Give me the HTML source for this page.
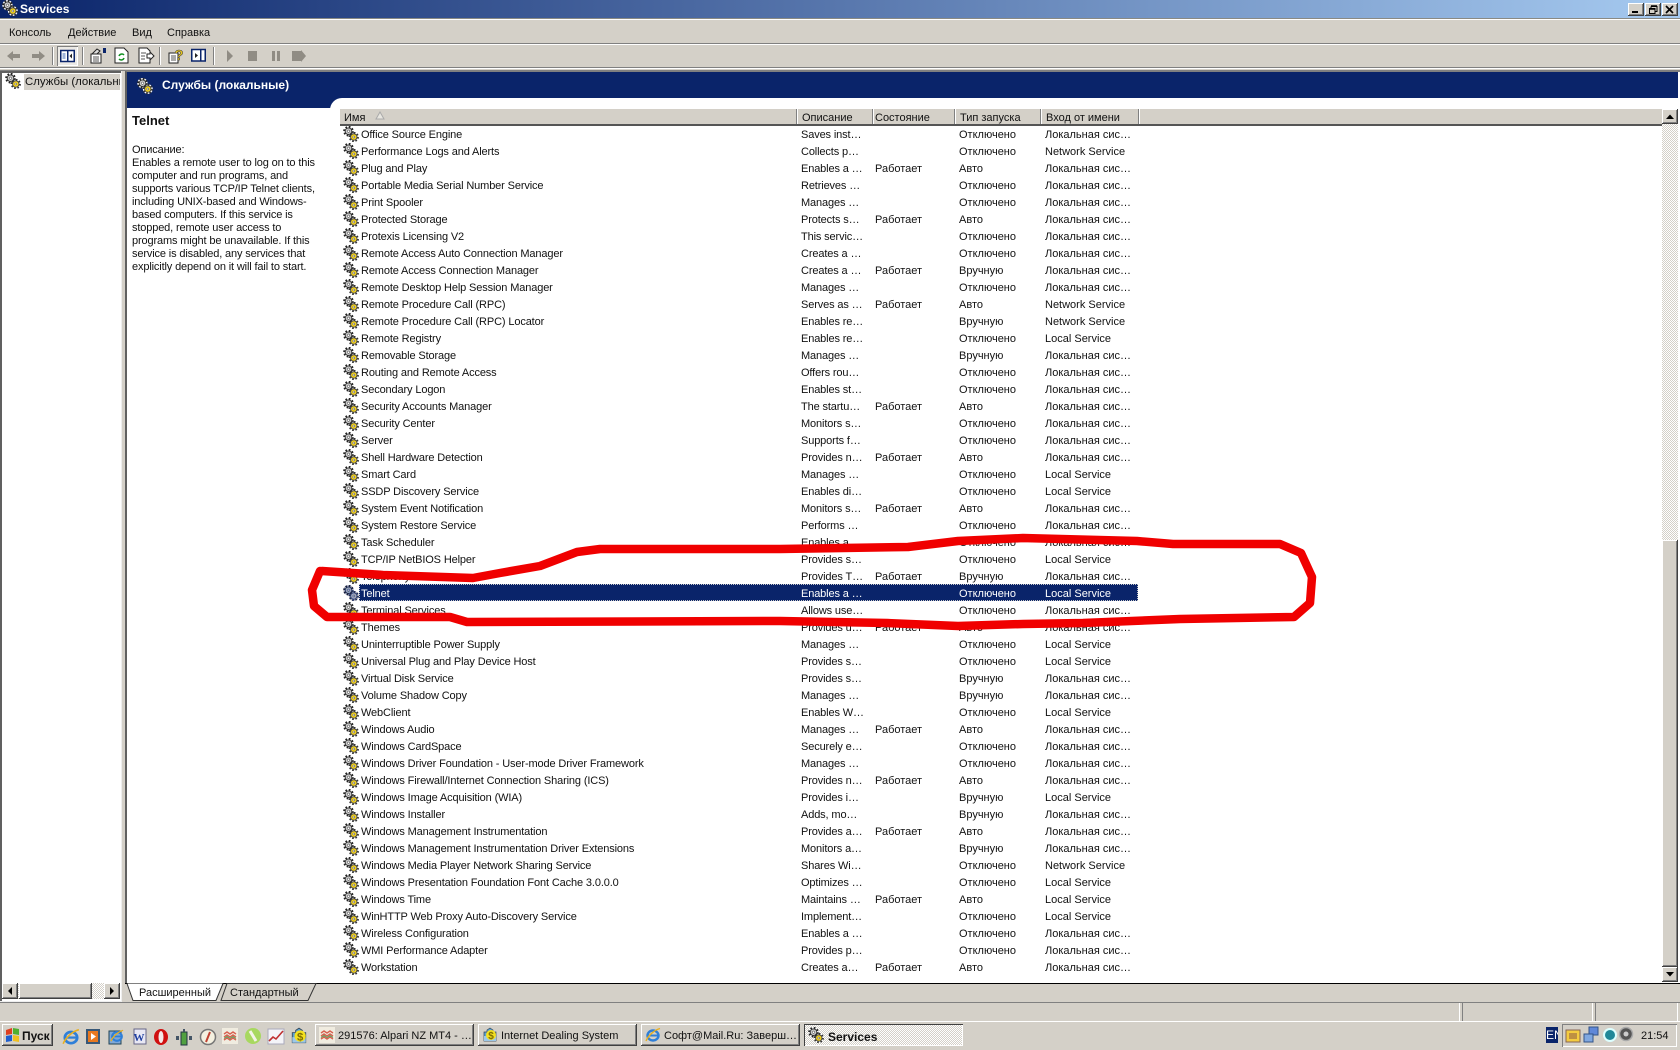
<!DOCTYPE html>
<html lang="ru"><head><meta charset="utf-8"><title>Services</title>
<style>
html,body{margin:0;padding:0;width:1680px;height:1050px;overflow:hidden;background:#d4d0c8}
body{position:relative;font:11px/13px "Liberation Sans","Noto Sans CJK SC",sans-serif;color:#111}
div,span,svg{position:absolute}
.b{background:#d4d0c8;box-shadow:inset -1px -1px #404040,inset 1px 1px #fff,inset -2px -2px #808080}
.ck{background:repeating-conic-gradient(#d4d0c8 0 25%,#fff 0 50%) 0 0/2px 2px}
.t{white-space:nowrap}
.lat{letter-spacing:-.14px}
table{position:absolute;left:340px;top:126px;border-collapse:collapse;table-layout:fixed;width:798px}
td{height:15px;padding:2px 0 0;white-space:nowrap;overflow:hidden;line-height:15px}
td:first-child,.c2{letter-spacing:-.13px}
td svg{position:static;display:inline-block;vertical-align:top;margin:-2px 2px 0 3px}
.c2,.c3,.c4,.c5{padding-left:5px}
.c3{padding-left:3px}
.sel td{color:#fff}
.sel svg{filter:grayscale(1) sepia(1) hue-rotate(190deg) saturate(3) brightness(.7)}
.sp{width:1px;height:18px;background:#808080;box-shadow:1px 0 #fff;top:47px}
.tb{top:1024px;height:22px;width:159px;line-height:22px;white-space:nowrap}
.tb span{top:1px;left:23px}
.h{top:111px;height:15px;line-height:15px;white-space:nowrap}
.hs{top:109px;width:1px;height:15px;background:#808080;box-shadow:1px 0 #fff}
</style></head><body>
<svg width="0" height="0" style="position:absolute"><defs>
<symbol id="g" viewBox="0 0 16 16">
<circle cx="5.5" cy="5.200" r="5.200" fill="#fff"/>
<circle cx="10.800" cy="11" r="5" fill="#fff"/>
<circle cx="5.500" cy="5.200" r="4.300" fill="none" stroke="#222" stroke-width="2" stroke-dasharray="1.700 1.700"/>
<circle cx="5.500" cy="5.200" r="3.300" fill="#c8c8c8" stroke="#333" stroke-width=".9"/>
<circle cx="5.500" cy="5.200" r="1.200" fill="#fff" stroke="#333" stroke-width=".5"/>
<circle cx="10.800" cy="11" r="4.100" fill="none" stroke="#333" stroke-width="2" stroke-dasharray="1.600 1.600"/>
<circle cx="10.800" cy="11" r="3.200" fill="#f0d020" stroke="#444" stroke-width=".9"/>
<circle cx="10.800" cy="11" r="1" fill="#fff" stroke="#444" stroke-width=".5"/>
</symbol>
<symbol id="e" viewBox="0 0 16 16">
<ellipse cx="8" cy="8.500" rx="5.500" ry="5" fill="none" stroke="#2f7fd8" stroke-width="2.400"/>
<path d="M3 8.500h10.500" stroke="#2f7fd8" stroke-width="2"/>
<path d="M1 14C3 9 9 3 15 1.500" fill="none" stroke="#e8b020" stroke-width="1.400"/>
</symbol>
<symbol id="d" viewBox="0 0 16 16">
<path d="M8 1l3 2v2h3v9H2V5h3V3z" fill="#5aa0d0" stroke="#345" stroke-width=".7"/>
<rect x="2" y="9" width="12" height="5" fill="#9cc8e8"/>
<circle cx="9" cy="8" r="5" fill="#f4e020"/>
<text x="9" y="12" font-size="10" font-weight="bold" fill="#807000" text-anchor="middle" font-family="Liberation Sans">$</text>
</symbol>
<symbol id="m" viewBox="0 0 16 16">
<rect width="16" height="16" fill="#f0ece0"/>
<path d="M2 6l3-2 3 2 3-2 3 2M2 9l3-2 3 2 3-2 3 2M2 12l3-2 3 2 3-2 3 2" fill="none" stroke="#d86050" stroke-width="1.400"/>
<path d="M2 10.500l3-2 3 2 3-2 3 2" fill="none" stroke="#60a060"/>
</symbol>
</defs></svg>

<!-- title bar -->
<div style="left:0;top:0;width:1680px;height:18px;background:linear-gradient(90deg,#0a246a,#a6caf0)"></div>
<svg style="left:2px;top:0" width="16" height="16"><use href="#g"/></svg>
<div class="t" style="left:20px;top:3px;color:#fff;font-weight:bold;font-size:12px">Services</div>
<div class="b" style="left:1628px;top:3px;width:16px;height:13px"></div>
<div style="left:1632px;top:11px;width:6px;height:2px;background:#000"></div>
<div class="b" style="left:1645px;top:3px;width:16px;height:13px"></div>
<svg style="left:1645px;top:3px" width="16" height="13"><path d="M6 3.500h6v5h-2M6 3.500v1.500M4.500 5.500h5.500v5h-5.500z" fill="none" stroke="#000"/><path d="M6 3h6M4.500 6h5.500" stroke="#000" stroke-width="1.500"/></svg>
<div class="b" style="left:1662px;top:3px;width:16px;height:13px"></div>
<svg style="left:1662px;top:3px" width="16" height="13"><path d="M4 3l7 7M11 3l-7 7" stroke="#000" stroke-width="1.700"/></svg>

<!-- menu -->
<div style="left:0;top:18px;width:1680px;height:1px;background:#8a8a84"></div>
<div style="left:0;top:19px;width:1680px;height:1px;background:#fff"></div>
<div class="t" style="left:9px;top:27px">Консоль</div>
<div class="t" style="left:68px;top:27px">Действие</div>
<div class="t" style="left:132px;top:27px">Вид</div>
<div class="t" style="left:167px;top:27px">Справка</div>
<div style="left:0;top:43px;width:1680px;height:1px;background:#808080"></div>
<div style="left:0;top:44px;width:1680px;height:1px;background:#fff"></div>
<!-- toolbar -->
<svg style="left:6px;top:48px" width="40" height="16"><path d="M1 8l6-5v3h7v4H7v3z" fill="#908c84"/><path d="M39 8l-6-5v3h-7v4h7v3z" fill="#908c84"/></svg>
<div class="sp" style="left:52px"></div>
<div style="left:57px;top:46px;width:21px;height:20px;background:#eceae6;box-shadow:inset 1px 1px #808080,inset -1px -1px #fff"></div>
<svg style="left:60px;top:48px" width="16" height="16"><rect x=".75" y="2.500" width="13.500" height="11" fill="#fff" stroke="#0a246a" stroke-width="1.500"/><rect x="7" y="3" width="1.500" height="10" fill="#0a246a"/><path d="M12 5.500v5L9.500 8z" fill="#222"/><rect x="2.500" y="5" width="3" height="6" fill="#a0b4d8"/></svg>
<div class="sp" style="left:82px"></div>
<svg style="left:90px;top:47px" width="17" height="17"><path d="M1 7h10v9H1z" fill="#fff" stroke="#222"/><path d="M3 10h6M3 12h6M3 14h6" stroke="#555"/><path d="M2 7l5-5 3 2-3 3z" fill="#ddd" stroke="#222"/><rect x="13" y="1" width="3" height="5" fill="#0a246a"/></svg>
<svg style="left:114px;top:47px" width="15" height="17"><path d="M1 1h9l4 4v11H1z" fill="#fff" stroke="#222"/><path d="M5 9a3 3 0 0 1 5-1M10 11a3 3 0 0 1-5 1" fill="none" stroke="#109020" stroke-width="1.500"/></svg>
<svg style="left:138px;top:47px" width="17" height="17"><path d="M1 1h8l3 3v12H1z" fill="#fff" stroke="#222"/><path d="M3 6h5M3 9h4M3 12h4" stroke="#555"/><path d="M9 7h3V5l4 4-4 4v-2H9z" fill="#fff" stroke="#222"/></svg>
<div class="sp" style="left:159px"></div>
<svg style="left:168px;top:47px" width="17" height="17"><path d="M1 6h9v10H1z" fill="#fff" stroke="#222"/><path d="M3 9h5M3 11h5M3 13h5" stroke="#555"/><text x="11" y="13" font-size="15" font-weight="bold" fill="#e8c820" stroke="#333" stroke-width=".5" text-anchor="middle" font-family="Liberation Sans">?</text></svg>
<svg style="left:191px;top:48px" width="15" height="15"><rect x=".75" y="1.500" width="13.500" height="11.500" fill="#fff" stroke="#0a246a" stroke-width="1.500"/><rect x="9" y="2" width="1.500" height="11" fill="#0a246a"/><path d="M4 5v5l3-2.500z" fill="#222"/></svg>
<div class="sp" style="left:213px"></div>
<svg style="left:226px;top:48px" width="84" height="16"><path d="M1 2l6 6-6 6z" fill="#908c84"/><rect x="22" y="3" width="9" height="10" fill="#908c84"/><rect x="46" y="3" width="3" height="10" fill="#908c84"/><rect x="51" y="3" width="3" height="10" fill="#908c84"/><rect x="66" y="3" width="9" height="10" fill="#908c84"/><path d="M75 2l5 6-5 6z" fill="#908c84"/></svg>
<div style="left:0;top:67px;width:1680px;height:1px;background:#808080"></div>
<div style="left:0;top:68px;width:1680px;height:1px;background:#fff"></div>
<div style="left:0;top:70px;width:1680px;height:1px;background:#808080"></div>

<!-- tree pane -->
<div style="left:0;top:71px;width:121px;height:930px;background:#fff;box-shadow:inset 2px 2px #606060;border-right:1px solid #eee;border-bottom:1px solid #eee"></div>
<svg style="left:5px;top:73px" width="16" height="16"><use href="#g"/></svg>
<div style="left:24px;top:74px;width:96px;height:16px;background:#d4d0c8;overflow:hidden"><span class="t" style="left:1px;top:2px;font-size:11.400px">Службы (локальные)</span></div>
<!-- hscroll tree -->
<div class="ck" style="left:2px;top:983px;width:118px;height:16px"></div>
<div class="b" style="left:2px;top:983px;width:16px;height:16px"></div>
<svg style="left:2px;top:983px" width="16" height="16"><path d="M10 4v8L6 8z" fill="#000"/></svg>
<div class="b" style="left:19px;top:983px;width:73px;height:16px"></div>
<div class="b" style="left:104px;top:983px;width:16px;height:16px"></div>
<svg style="left:104px;top:983px" width="16" height="16"><path d="M6 4v8l4-4z" fill="#000"/></svg>

<!-- right pane -->
<div style="left:125px;top:71px;width:1555px;height:912px;background:#fff;border-left:2px solid #606060;border-top:1px solid #808080;box-sizing:border-box"></div>
<div style="left:127px;top:72px;width:1551px;height:26px;background:#0a246a"></div>
<div style="left:127px;top:98px;width:220px;height:10px;background:#0a246a"></div>
<div style="left:330px;top:98px;width:30px;height:12px;background:#fff;border-radius:12px 0 0 0"></div>
<svg style="left:137px;top:78px" width="16" height="16"><use href="#g"/></svg>
<div class="t" style="left:162px;top:79px;color:#fff;font-weight:bold;font-size:12px">Службы (локальные)</div>
<div class="t" style="left:132px;top:114px;font-weight:bold;font-size:13px">Telnet</div>
<div class="t lat" style="left:132px;top:144px">Описание:<br>Enables a remote user to log on to this<br>computer and run programs, and<br>supports various TCP/IP Telnet clients,<br>including UNIX-based and Windows-<br>based computers. If this service is<br>stopped, remote user access to<br>programs might be unavailable. If this<br>service is disabled, any services that<br>explicitly depend on it will fail to start.</div>

<!-- list header -->
<div style="left:340px;top:109px;width:1322px;height:15px;background:#d4d0c8;border-bottom:2px solid #555"></div>
<div class="h" style="left:344px">Имя</div>
<svg style="left:375px;top:111px" width="11" height="10"><path d="M5 1l4 7H1z" fill="#e8e6e0" stroke="#aaa"/></svg>
<div class="hs" style="left:796px"></div><div class="h" style="left:802px">Описание</div>
<div class="hs" style="left:872px"></div><div class="h" style="left:875px">Состояние</div>
<div class="hs" style="left:954px"></div><div class="h" style="left:960px">Тип запуска</div>
<div class="hs" style="left:1040px"></div><div class="h" style="left:1046px">Вход от имени</div>
<div class="hs" style="left:1138px"></div>

<!-- scrollbar -->
<div class="ck" style="left:1662px;top:109px;width:16px;height:431px"></div>
<div class="b" style="left:1662px;top:109px;width:16px;height:15px"></div>
<svg style="left:1662px;top:109px" width="16" height="15"><path d="M4 10h8L8 5.500z" fill="#000"/></svg>
<div class="b" style="left:1662px;top:540px;width:16px;height:427px"></div>
<div class="b" style="left:1662px;top:967px;width:16px;height:15px"></div>
<svg style="left:1662px;top:967px" width="16" height="15"><path d="M4 5h8L8 9.500z" fill="#000"/></svg>

<!-- selection -->
<div style="left:359px;top:584px;width:779px;height:17px;background:#0a246a;outline:1px dotted #c8c8c8;outline-offset:-1px"></div>

<table><colgroup><col style="width:456px"><col style="width:76px"><col style="width:82px"><col style="width:86px"><col style="width:98px"></colgroup>
<tr><td><svg width="16" height="16"><use href="#g"/></svg>Office Source Engine</td><td class="c2">Saves inst…</td><td class="c3"></td><td class="c4">Отключено</td><td class="c5">Локальная сис…</td></tr>
<tr><td><svg width="16" height="16"><use href="#g"/></svg>Performance Logs and Alerts</td><td class="c2">Collects p…</td><td class="c3"></td><td class="c4">Отключено</td><td class="c5">Network Service</td></tr>
<tr><td><svg width="16" height="16"><use href="#g"/></svg>Plug and Play</td><td class="c2">Enables a …</td><td class="c3">Работает</td><td class="c4">Авто</td><td class="c5">Локальная сис…</td></tr>
<tr><td><svg width="16" height="16"><use href="#g"/></svg>Portable Media Serial Number Service</td><td class="c2">Retrieves …</td><td class="c3"></td><td class="c4">Отключено</td><td class="c5">Локальная сис…</td></tr>
<tr><td><svg width="16" height="16"><use href="#g"/></svg>Print Spooler</td><td class="c2">Manages …</td><td class="c3"></td><td class="c4">Отключено</td><td class="c5">Локальная сис…</td></tr>
<tr><td><svg width="16" height="16"><use href="#g"/></svg>Protected Storage</td><td class="c2">Protects s…</td><td class="c3">Работает</td><td class="c4">Авто</td><td class="c5">Локальная сис…</td></tr>
<tr><td><svg width="16" height="16"><use href="#g"/></svg>Protexis Licensing V2</td><td class="c2">This servic…</td><td class="c3"></td><td class="c4">Отключено</td><td class="c5">Локальная сис…</td></tr>
<tr><td><svg width="16" height="16"><use href="#g"/></svg>Remote Access Auto Connection Manager</td><td class="c2">Creates a …</td><td class="c3"></td><td class="c4">Отключено</td><td class="c5">Локальная сис…</td></tr>
<tr><td><svg width="16" height="16"><use href="#g"/></svg>Remote Access Connection Manager</td><td class="c2">Creates a …</td><td class="c3">Работает</td><td class="c4">Вручную</td><td class="c5">Локальная сис…</td></tr>
<tr><td><svg width="16" height="16"><use href="#g"/></svg>Remote Desktop Help Session Manager</td><td class="c2">Manages …</td><td class="c3"></td><td class="c4">Отключено</td><td class="c5">Локальная сис…</td></tr>
<tr><td><svg width="16" height="16"><use href="#g"/></svg>Remote Procedure Call (RPC)</td><td class="c2">Serves as …</td><td class="c3">Работает</td><td class="c4">Авто</td><td class="c5">Network Service</td></tr>
<tr><td><svg width="16" height="16"><use href="#g"/></svg>Remote Procedure Call (RPC) Locator</td><td class="c2">Enables re…</td><td class="c3"></td><td class="c4">Вручную</td><td class="c5">Network Service</td></tr>
<tr><td><svg width="16" height="16"><use href="#g"/></svg>Remote Registry</td><td class="c2">Enables re…</td><td class="c3"></td><td class="c4">Отключено</td><td class="c5">Local Service</td></tr>
<tr><td><svg width="16" height="16"><use href="#g"/></svg>Removable Storage</td><td class="c2">Manages …</td><td class="c3"></td><td class="c4">Вручную</td><td class="c5">Локальная сис…</td></tr>
<tr><td><svg width="16" height="16"><use href="#g"/></svg>Routing and Remote Access</td><td class="c2">Offers rou…</td><td class="c3"></td><td class="c4">Отключено</td><td class="c5">Локальная сис…</td></tr>
<tr><td><svg width="16" height="16"><use href="#g"/></svg>Secondary Logon</td><td class="c2">Enables st…</td><td class="c3"></td><td class="c4">Отключено</td><td class="c5">Локальная сис…</td></tr>
<tr><td><svg width="16" height="16"><use href="#g"/></svg>Security Accounts Manager</td><td class="c2">The startu…</td><td class="c3">Работает</td><td class="c4">Авто</td><td class="c5">Локальная сис…</td></tr>
<tr><td><svg width="16" height="16"><use href="#g"/></svg>Security Center</td><td class="c2">Monitors s…</td><td class="c3"></td><td class="c4">Отключено</td><td class="c5">Локальная сис…</td></tr>
<tr><td><svg width="16" height="16"><use href="#g"/></svg>Server</td><td class="c2">Supports f…</td><td class="c3"></td><td class="c4">Отключено</td><td class="c5">Локальная сис…</td></tr>
<tr><td><svg width="16" height="16"><use href="#g"/></svg>Shell Hardware Detection</td><td class="c2">Provides n…</td><td class="c3">Работает</td><td class="c4">Авто</td><td class="c5">Локальная сис…</td></tr>
<tr><td><svg width="16" height="16"><use href="#g"/></svg>Smart Card</td><td class="c2">Manages …</td><td class="c3"></td><td class="c4">Отключено</td><td class="c5">Local Service</td></tr>
<tr><td><svg width="16" height="16"><use href="#g"/></svg>SSDP Discovery Service</td><td class="c2">Enables di…</td><td class="c3"></td><td class="c4">Отключено</td><td class="c5">Local Service</td></tr>
<tr><td><svg width="16" height="16"><use href="#g"/></svg>System Event Notification</td><td class="c2">Monitors s…</td><td class="c3">Работает</td><td class="c4">Авто</td><td class="c5">Локальная сис…</td></tr>
<tr><td><svg width="16" height="16"><use href="#g"/></svg>System Restore Service</td><td class="c2">Performs …</td><td class="c3"></td><td class="c4">Отключено</td><td class="c5">Локальная сис…</td></tr>
<tr><td><svg width="16" height="16"><use href="#g"/></svg>Task Scheduler</td><td class="c2">Enables a …</td><td class="c3"></td><td class="c4">Отключено</td><td class="c5">Локальная сис…</td></tr>
<tr><td><svg width="16" height="16"><use href="#g"/></svg>TCP/IP NetBIOS Helper</td><td class="c2">Provides s…</td><td class="c3"></td><td class="c4">Отключено</td><td class="c5">Local Service</td></tr>
<tr><td><svg width="16" height="16"><use href="#g"/></svg>Telephony</td><td class="c2">Provides T…</td><td class="c3">Работает</td><td class="c4">Вручную</td><td class="c5">Локальная сис…</td></tr>
<tr class="sel"><td><svg width="16" height="16"><use href="#g"/></svg>Telnet</td><td class="c2">Enables a …</td><td class="c3"></td><td class="c4">Отключено</td><td class="c5">Local Service</td></tr>
<tr><td><svg width="16" height="16"><use href="#g"/></svg>Terminal Services</td><td class="c2">Allows use…</td><td class="c3"></td><td class="c4">Отключено</td><td class="c5">Локальная сис…</td></tr>
<tr><td><svg width="16" height="16"><use href="#g"/></svg>Themes</td><td class="c2">Provides u…</td><td class="c3">Работает</td><td class="c4">Авто</td><td class="c5">Локальная сис…</td></tr>
<tr><td><svg width="16" height="16"><use href="#g"/></svg>Uninterruptible Power Supply</td><td class="c2">Manages …</td><td class="c3"></td><td class="c4">Отключено</td><td class="c5">Local Service</td></tr>
<tr><td><svg width="16" height="16"><use href="#g"/></svg>Universal Plug and Play Device Host</td><td class="c2">Provides s…</td><td class="c3"></td><td class="c4">Отключено</td><td class="c5">Local Service</td></tr>
<tr><td><svg width="16" height="16"><use href="#g"/></svg>Virtual Disk Service</td><td class="c2">Provides s…</td><td class="c3"></td><td class="c4">Вручную</td><td class="c5">Локальная сис…</td></tr>
<tr><td><svg width="16" height="16"><use href="#g"/></svg>Volume Shadow Copy</td><td class="c2">Manages …</td><td class="c3"></td><td class="c4">Вручную</td><td class="c5">Локальная сис…</td></tr>
<tr><td><svg width="16" height="16"><use href="#g"/></svg>WebClient</td><td class="c2">Enables W…</td><td class="c3"></td><td class="c4">Отключено</td><td class="c5">Local Service</td></tr>
<tr><td><svg width="16" height="16"><use href="#g"/></svg>Windows Audio</td><td class="c2">Manages …</td><td class="c3">Работает</td><td class="c4">Авто</td><td class="c5">Локальная сис…</td></tr>
<tr><td><svg width="16" height="16"><use href="#g"/></svg>Windows CardSpace</td><td class="c2">Securely e…</td><td class="c3"></td><td class="c4">Отключено</td><td class="c5">Локальная сис…</td></tr>
<tr><td><svg width="16" height="16"><use href="#g"/></svg>Windows Driver Foundation - User-mode Driver Framework</td><td class="c2">Manages …</td><td class="c3"></td><td class="c4">Отключено</td><td class="c5">Локальная сис…</td></tr>
<tr><td><svg width="16" height="16"><use href="#g"/></svg>Windows Firewall/Internet Connection Sharing (ICS)</td><td class="c2">Provides n…</td><td class="c3">Работает</td><td class="c4">Авто</td><td class="c5">Локальная сис…</td></tr>
<tr><td><svg width="16" height="16"><use href="#g"/></svg>Windows Image Acquisition (WIA)</td><td class="c2">Provides i…</td><td class="c3"></td><td class="c4">Вручную</td><td class="c5">Local Service</td></tr>
<tr><td><svg width="16" height="16"><use href="#g"/></svg>Windows Installer</td><td class="c2">Adds, mo…</td><td class="c3"></td><td class="c4">Вручную</td><td class="c5">Локальная сис…</td></tr>
<tr><td><svg width="16" height="16"><use href="#g"/></svg>Windows Management Instrumentation</td><td class="c2">Provides a…</td><td class="c3">Работает</td><td class="c4">Авто</td><td class="c5">Локальная сис…</td></tr>
<tr><td><svg width="16" height="16"><use href="#g"/></svg>Windows Management Instrumentation Driver Extensions</td><td class="c2">Monitors a…</td><td class="c3"></td><td class="c4">Вручную</td><td class="c5">Локальная сис…</td></tr>
<tr><td><svg width="16" height="16"><use href="#g"/></svg>Windows Media Player Network Sharing Service</td><td class="c2">Shares Wi…</td><td class="c3"></td><td class="c4">Отключено</td><td class="c5">Network Service</td></tr>
<tr><td><svg width="16" height="16"><use href="#g"/></svg>Windows Presentation Foundation Font Cache 3.0.0.0</td><td class="c2">Optimizes …</td><td class="c3"></td><td class="c4">Отключено</td><td class="c5">Local Service</td></tr>
<tr><td><svg width="16" height="16"><use href="#g"/></svg>Windows Time</td><td class="c2">Maintains …</td><td class="c3">Работает</td><td class="c4">Авто</td><td class="c5">Local Service</td></tr>
<tr><td><svg width="16" height="16"><use href="#g"/></svg>WinHTTP Web Proxy Auto-Discovery Service</td><td class="c2">Implement…</td><td class="c3"></td><td class="c4">Отключено</td><td class="c5">Local Service</td></tr>
<tr><td><svg width="16" height="16"><use href="#g"/></svg>Wireless Configuration</td><td class="c2">Enables a …</td><td class="c3"></td><td class="c4">Отключено</td><td class="c5">Локальная сис…</td></tr>
<tr><td><svg width="16" height="16"><use href="#g"/></svg>WMI Performance Adapter</td><td class="c2">Provides p…</td><td class="c3"></td><td class="c4">Отключено</td><td class="c5">Локальная сис…</td></tr>
<tr><td><svg width="16" height="16"><use href="#g"/></svg>Workstation</td><td class="c2">Creates a…</td><td class="c3">Работает</td><td class="c4">Авто</td><td class="c5">Локальная сис…</td></tr>
</table>

<!-- red scribble -->
<svg style="left:0;top:0;pointer-events:none" width="1680" height="1050"><path d="M322 571L383 575L473 578L500 573L540 566L577 552L600 549L780 549L908 547L958 541L1023 538L1137 541L1173 544L1280 544L1301 553L1312 577L1310 603L1294 617L1180 619L1083 623L1023 624L958 626L887 623L780 621L467 622L450 617L327 617L314 606L312 590L320 571" fill="none" stroke="#f00000" stroke-width="8.500" stroke-linejoin="round" stroke-linecap="round"/></svg>

<!-- tabs -->
<div style="left:125px;top:983px;width:1555px;height:1px;background:#000"></div>
<svg style="left:120px;top:980px" width="210" height="24"><path d="M101 20.500L107 3.500H196L188 20.500z" fill="#d4d0c8" stroke="#333"/><path d="M7 3.500L13 20.500H96L103 3.500" fill="#fff" stroke="#333"/></svg>
<div class="t" style="left:139px;top:987px">Расширенный</div>
<div class="t" style="left:230px;top:987px">Стандартный</div>

<!-- status -->
<div style="left:0;top:1002px;width:1680px;height:1px;background:#808080"></div>
<div style="left:0;top:1021px;width:1680px;height:1px;background:#fff"></div>
<div style="left:1459px;top:1003px;width:1px;height:18px;background:#fff"></div>
<div style="left:1462px;top:1002px;width:1px;height:19px;background:#808080"></div>
<div style="left:1592px;top:1003px;width:1px;height:18px;background:#fff"></div>
<div style="left:1595px;top:1002px;width:1px;height:19px;background:#808080"></div>
<div style="left:1677px;top:1003px;width:1px;height:18px;background:#fff"></div>

<!-- taskbar -->
<div class="b" style="left:2px;top:1024px;width:51px;height:22px"></div>
<svg style="left:5px;top:1027px" width="16" height="16"><path d="M1 3l6-2v6l-6 1z" fill="#e04020"/><path d="M8 1l6 1v6l-6-1z" fill="#50b030"/><path d="M1 9l6-1v6l-6 1z" fill="#2060d0"/><path d="M8 8l6 1v6l-6-1z" fill="#f0c020"/></svg>
<div class="t" style="left:22px;top:1030px;font-weight:bold;font-size:12px">Пуск</div>
<svg style="left:62px;top:1028px" width="18" height="18"><use href="#e"/></svg>
<svg style="left:84px;top:1028px" width="18" height="18"><rect x="2" y="1" width="14" height="15" fill="#385878"/><rect x="4" y="3" width="10" height="11" fill="#e87820"/><path d="M7 5v7l5-3.500z" fill="#fff"/></svg>
<svg style="left:107px;top:1028px" width="18" height="18"><rect x="2" y="3" width="12" height="13" fill="#80a8d8" stroke="#245"/><use href="#e" width="14" height="14" x="3" y="1"/></svg>
<svg style="left:130px;top:1028px" width="18" height="18"><rect x="4" y="1" width="12" height="15" fill="#e8e8f4" stroke="#668"/><text x="9" y="13" font-size="11" font-weight="bold" fill="#2040a0" font-family="Liberation Serif" text-anchor="middle">W</text></svg>
<svg style="left:152px;top:1027px" width="18" height="20"><ellipse cx="9" cy="10" rx="7" ry="8" fill="#d01010"/><ellipse cx="9" cy="10" rx="2.500" ry="6" fill="#f4e8e8"/></svg>
<svg style="left:175px;top:1027px" width="18" height="20"><rect x="6" y="5" width="6" height="13" fill="#50a040" stroke="#234"/><rect x="1" y="9" width="3" height="4" fill="#456"/><rect x="14" y="9" width="3" height="4" fill="#456"/><rect x="8" y="2" width="2" height="3" fill="#456"/></svg>
<svg style="left:199px;top:1027px" width="18" height="20"><circle cx="9" cy="10" r="7.500" fill="#f4f0e0" stroke="#777" stroke-width="1.500"/><path d="M11 5L7 15" stroke="#c04030" stroke-width="2"/></svg>
<svg style="left:222px;top:1028px" width="16" height="16"><use href="#m"/></svg>
<svg style="left:244px;top:1027px" width="18" height="18"><circle cx="9" cy="9" r="8" fill="#a8d860"/><path d="M6 4l6 10" stroke="#f4f4e8" stroke-width="3"/></svg>
<svg style="left:267px;top:1028px" width="18" height="18"><rect x="1" y="1" width="16" height="15" fill="#f4f4f8" stroke="#aab"/><path d="M2 13l4-4 3 2 7-8" fill="none" stroke="#c03030" stroke-width="1.600"/></svg>
<svg style="left:290px;top:1027px" width="18" height="18"><use href="#d"/></svg>

<div class="b tb" style="left:315px"><svg style="left:4px;top:3px" width="16" height="16"><use href="#m"/></svg><span>291576: Alpari NZ MT4 - …</span></div>
<div class="b tb" style="left:478px"><svg style="left:4px;top:3px" width="16" height="16"><use href="#d"/></svg><span>Internet Dealing System</span></div>
<div class="b tb" style="left:641px"><svg style="left:4px;top:3px" width="16" height="16"><use href="#e"/></svg><span>Софт@Mail.Ru: Заверш…</span></div>
<div class="ck tb" style="left:804px;box-shadow:inset 1px 1px #404040,inset -1px -1px #fff"><svg style="left:4px;top:3px" width="16" height="16"><use href="#g"/></svg><span style="left:24px;top:2px;font-weight:bold;font-size:12px">Services</span></div>

<div style="left:1546px;top:1027px;width:12px;height:16px;background:#0a246a;color:#fff;overflow:hidden;font-size:12px;line-height:16px;white-space:nowrap">EN</div>
<div style="left:1562px;top:1024px;width:115px;height:23px;box-shadow:inset 1px 1px #808080,inset -1px -1px #fff"></div>
<svg style="left:1565px;top:1027px" width="16" height="16"><rect x="1" y="3" width="14" height="12" fill="#f4cc40" stroke="#865"/><path d="M4 7h8M4 9h8M4 11h8" stroke="#854"/></svg>
<svg style="left:1583px;top:1026px" width="16" height="18"><rect x="6" y="1" width="9" height="8" fill="#6088d8" stroke="#358"/><rect x="1" y="8" width="9" height="8" fill="#80a8e0" stroke="#358"/></svg>
<svg style="left:1602px;top:1027px" width="16" height="16"><circle cx="8" cy="8" r="7" fill="#dff"/><circle cx="8" cy="8" r="5" fill="#208898"/></svg>
<svg style="left:1618px;top:1026px" width="18" height="18"><circle cx="8" cy="8" r="6.500" fill="#555" stroke="#aaa" stroke-width="1.500"/><circle cx="8" cy="8" r="2.500" fill="#ccc"/></svg>
<div class="t" style="left:1641px;top:1030px">21:54</div>
</body></html>
